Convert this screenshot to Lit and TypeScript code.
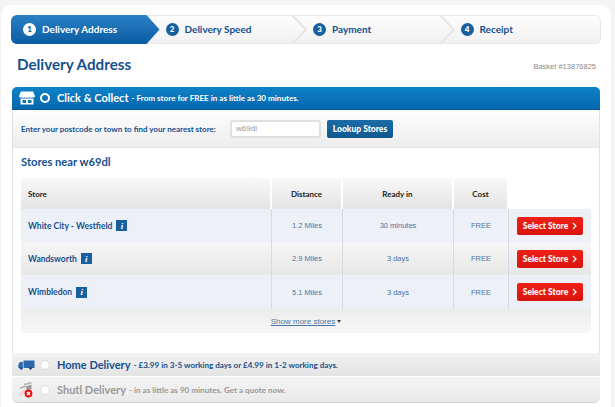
import { LitElement, html, css, svg } from "lit";
import { customElement } from "lit/decorators.js";

const steps = ["Delivery Address", "Delivery Speed", "Payment", "Receipt"];
const stores = [
  { name: "White City - Westfield", dist: "1.2 Miles", ready: "30 minutes" },
  { name: "Wandsworth", dist: "2.9 Miles", ready: "3 days" },
  { name: "Wimbledon", dist: "5.1 Miles", ready: "3 days" },
];

const chevron = svg`<svg class="chev" width="17" height="29" viewBox="0 0 17 29"><path d="M1 0 L15 14.5 L1 29" fill="none" stroke="#e6e6e6" stroke-width="2"/></svg>`;

const storeIcon = svg`<svg width="16" height="14" viewBox="0 0 16 14"><path d="M2 0.5H14L16 5C16 6.4 14.6 6.8 13.4 6.2 12.6 6.9 11 6.9 10.4 6.2 9.6 6.9 6.4 6.9 5.6 6.2 5 6.9 3.4 6.9 2.6 6.2 1.4 6.8 0 6.4 0 5Z" fill="#fff"/><path d="M1.5 7.5H14.5V13.5H1.5Z" fill="#fff"/><path d="M3.5 9H7V12H3.5ZM9 9H12.5V12H9Z" fill="#1473b5"/></svg>`;

const truckIcon = svg`<svg width="17" height="10" viewBox="0 0 17 10"><path d="M5.5 0.5H16.5V8H5.5ZM4.8 2V8H0.3V5L1.8 2Z" fill="#2a68ad"/><circle cx="3.2" cy="8.3" r="1.4" fill="#1a4f8c"/><circle cx="12.5" cy="8.3" r="1.4" fill="#1a4f8c"/></svg>`;

const shutlIcon = svg`<svg width="16" height="16" viewBox="0 0 16 16"><path d="M1 6.5L6.5 4M5 2.5L12.5 0.8" stroke="#b5b5b5" stroke-width="1.6" fill="none"/><path d="M6.5 4.5L12.5 2.5V6.5L8.5 9Z" fill="#9a9a9a"/><path d="M1 13.5L7 7.5" stroke="#f6cfcf" stroke-width="3"/><circle cx="9.5" cy="11.5" r="3.9" fill="#e01515"/><path d="M8 10L11 13M11 10L8 13" stroke="#fff" stroke-width="1.2"/></svg>`;

@customElement("app-root")
export class AppRoot extends LitElement {
  static styles = css`
    :host {
      display: block;
      height: 407px;
      overflow: hidden;
      background: #f4f4f4;
      font-family: "Lato", "Open Sans", sans-serif;
      color: #0f4a8a;
    }
    * { box-sizing: border-box; }
    .card {
      margin: 5px 4px 0 1px;
      height: 402px;
      background: #fff;
      border-radius: 10px 10px 0 0;
      padding: 10px 9px 0 10px;
    }
    .steps {
      display: grid;
      grid-template-columns: repeat(4, 1fr);
      height: 29px;
      border-radius: 6px;
      background: linear-gradient(#fdfdfd, #f1f1f1);
      box-shadow: inset 0 0 0 1px #e8e8e8;
      width: 590px;
    }
    .step {
      position: relative;
      display: flex;
      align-items: center;
      gap: 6px;
      padding: 0 0 1px 7px;
      font-size: 10px;
      font-weight: 700;
      color: #11508f;
      white-space: nowrap;
    }
    .step.active {
      color: #fff;
      padding-left: 12px;
      border-radius: 6px 0 0 6px;
      background: linear-gradient(#2b80c4, #0a5ca3);
      clip-path: polygon(0 0, calc(100% - 13px) 0, 100% 50%, calc(100% - 13px) 100%, 0 100%);
      margin-right: -1px;
    }
    .num {
      flex: none;
      width: 13px;
      height: 13px;
      border-radius: 50%;
      background: #17609f;
      color: #fff;
      font-size: 8px;
      font-weight: 900;
      display: flex;
      align-items: center;
      justify-content: center;
    }
    .active .num { background: #fff; color: #11508f; }
    .chev { position: absolute; right: -2px; top: 0; }
    .head {
      display: flex;
      justify-content: space-between;
      align-items: center;
      height: 43px;
      padding: 0 6px;
    }
    h1 {
      margin: 0 0 3px;
      font-size: 15.2px;
      font-weight: 700;
      color: #15508e;
    }
    .basket {
      font: 7.5px "Liberation Sans", Arial, sans-serif;
      color: #8a8a8a;
      padding-top: 2px;
    }
    .panel {
      margin: 0 1px;
      width: 588px;
    }
    .open {
      border-left: 1px solid #e2e2e2;
      border-right: 1px solid #e2e2e2;
      padding-bottom: 20px;
    }
    .bar {
      display: flex;
      align-items: center;
      white-space: nowrap;
    }
    .ico {
      width: 23px;
      display: flex;
      justify-content: flex-end;
      flex: none;
    }
    .radio {
      flex: none;
      width: 10px;
      height: 10px;
      border-radius: 50%;
      background: #fff;
      border: 1px solid #ddd;
      margin: 0 7px 0 5px;
    }
    .big { font-size: 11px; font-weight: 700; padding-bottom: 1px; }
    .small { font-size: 8.1px; font-weight: 700; margin-left: 3px; }
    .bar.blue {
      height: 23px;
      margin: 0 -1px;
      width: 588px;
      color: #fff;
      border-radius: 5px 5px 0 0;
      background: linear-gradient(#0e82c8, #0567ae);
      border-bottom: 1px solid #07589a;
      padding-bottom: 1px;
    }
    .bar.blue .radio {
      background: #1473b5;
      border: 2.5px solid #fff;
    }
    .search {
      display: flex;
      align-items: center;
      height: 38px;
      padding-left: 8px;
      background: linear-gradient(#fff, #ececec);
      border-bottom: 1px solid #e4e4e4;
      font-size: 8px;
      font-weight: 700;
      color: #15508e;
    }
    .search label { width: 209px; }
    .field {
      width: 91px;
      height: 18px;
      background: #fff;
      border: 2px solid #e0e0e0;
      border-radius: 3px;
      font: 8px "Liberation Sans", Arial, sans-serif;
      color: #999;
      padding-left: 4px;
      display: flex;
      align-items: center;
      margin-right: 6px;
    }
    .lookup {
      width: 66px;
      height: 18px;
      border-radius: 2px;
      background: linear-gradient(#1c6ca8, #10588f);
      color: #fff;
      font-size: 8.5px;
      font-weight: 900;
      display: flex;
      align-items: center;
      justify-content: center;
    }
    h2 {
      margin: 0;
      height: 30px;
      padding: 7px 0 0 8px;
      font-size: 11.2px;
      font-weight: 700;
      color: #15508e;
    }
    .table {
      margin-left: 8px;
      width: 570px;
      display: grid;
      grid-template-columns: 251px 71px 111px 55px 82px;
      grid-template-rows: 31px 33px 33px 34px 24px;
    }
    .th {
      background: linear-gradient(#f8f8f8, #e4e4e4);
      border-right: 2px solid #fff;
      display: flex;
      align-items: center;
      justify-content: center;
      font-size: 8px;
      font-weight: 700;
      color: #222;
    }
    .th.first { justify-content: flex-start; padding-left: 7px; }
    .th.blank { background: #fff; border: 0; }
    .td {
      display: flex;
      align-items: center;
      justify-content: center;
      font: 7.5px "Liberation Sans", Arial, sans-serif;
      color: #4a76a4;
      border-right: 1.5px solid #d6d9e6;
      background: #eef0f8;
    }
    .td.even {
      background: linear-gradient(#f6f6f6, #e7e7e7);
    }
    .td.name {
      justify-content: flex-start;
      padding-left: 7px;
      gap: 4px;
      font: 700 8.5px "Lato", sans-serif;
      color: #15508e;
    }
    .td.act { border-right: 0; }
    .info {
      width: 11px;
      height: 11px;
      background: #17609f;
      color: #fff;
      font: italic 700 9px "Liberation Serif", serif;
      display: flex;
      align-items: center;
      justify-content: center;
    }
    .select {
      width: 66px;
      height: 18px;
      border-radius: 2px;
      background: linear-gradient(#ee2016, #d9140c);
      color: #fff;
      font: 900 8.5px "Lato", sans-serif;
      display: flex;
      align-items: center;
      justify-content: center;
      gap: 4px;
    }
    .more {
      grid-column: 1 / -1;
      background: linear-gradient(#ececec, #f7f7f7);
      border-radius: 0 0 4px 4px;
      display: flex;
      align-items: center;
      justify-content: center;
      gap: 2px;
      font: 8px "Liberation Sans", Arial, sans-serif;
      color: #4a76a4;
    }
    .more u { text-underline-offset: 1px; }
    .caret {
      width: 0;
      height: 0;
      border-left: 2.5px solid transparent;
      border-right: 2.5px solid transparent;
      border-top: 3px solid #444;
    }
    .bar.home {
      height: 24px;
      background: linear-gradient(#f2f2f2, #e3e3e3);
      border-bottom: 1px solid #fff;
      color: #15508e;
    }
    .bar.shutl {
      height: 26px;
      background: linear-gradient(#f4f4f4, #e9e9e9);
      border-radius: 0 0 6px 6px;
      border-bottom: 1px solid #d4d4d4;
      color: #999;
    }
  `;

  render() {
    return html`
      <div class="card">
        <div class="steps">
          ${steps.map(
            (s, i) => html`<div class="step ${i === 0 ? "active" : ""}">
              <span class="num">${i + 1}</span>${s}${i > 0 && i < 3 ? chevron : ""}
            </div>`
          )}
        </div>
        <div class="head">
          <h1>Delivery Address</h1>
          <span class="basket">Basket #13876825</span>
        </div>
        <div class="panel">
          <div class="open">
            <div class="bar blue">
              <span class="ico">${storeIcon}</span><span class="radio"></span>
              <span class="big">Click &amp; Collect</span>
              <span class="small">- From store for FREE in as little as 30 minutes.</span>
            </div>
            <div class="search">
              <label>Enter your postcode or town to find your nearest store:</label>
              <div class="field">w69dl</div>
              <div class="lookup">Lookup Stores</div>
            </div>
            <h2>Stores near w69dl</h2>
            <div class="table">
              <div class="th first">Store</div>
              <div class="th">Distance</div>
              <div class="th">Ready in</div>
              <div class="th">Cost</div>
              <div class="th blank"></div>
              ${stores.map((r, i) => {
                const e = i % 2 === 1 ? "even" : "";
                return html`
                  <div class="td name ${e}">${r.name}<span class="info">i</span></div>
                  <div class="td ${e}">${r.dist}</div>
                  <div class="td ${e}">${r.ready}</div>
                  <div class="td ${e}">FREE</div>
                  <div class="td act ${e}">
                    <div class="select">Select Store
                      <svg width="5" height="8" viewBox="0 0 5 8"><path d="M1 1L4 4L1 7" fill="none" stroke="#fff" stroke-width="1.2"/></svg>
                    </div>
                  </div>`;
              })}
              <div class="more"><u>Show more stores </u><span class="caret"></span></div>
            </div>
          </div>
          <div class="bar home">
            <span class="ico">${truckIcon}</span><span class="radio"></span>
            <span class="big">Home Delivery</span>
            <span class="small">- £3.99 in 3-5 working days or £4.99 in 1-2 working days.</span>
          </div>
          <div class="bar shutl">
            <span class="ico">${shutlIcon}</span><span class="radio"></span>
            <span class="big">Shutl Delivery</span>
            <span class="small">- in as little as 90 minutes. Get a quote now.</span>
          </div>
        </div>
      </div>
    `;
  }
}
